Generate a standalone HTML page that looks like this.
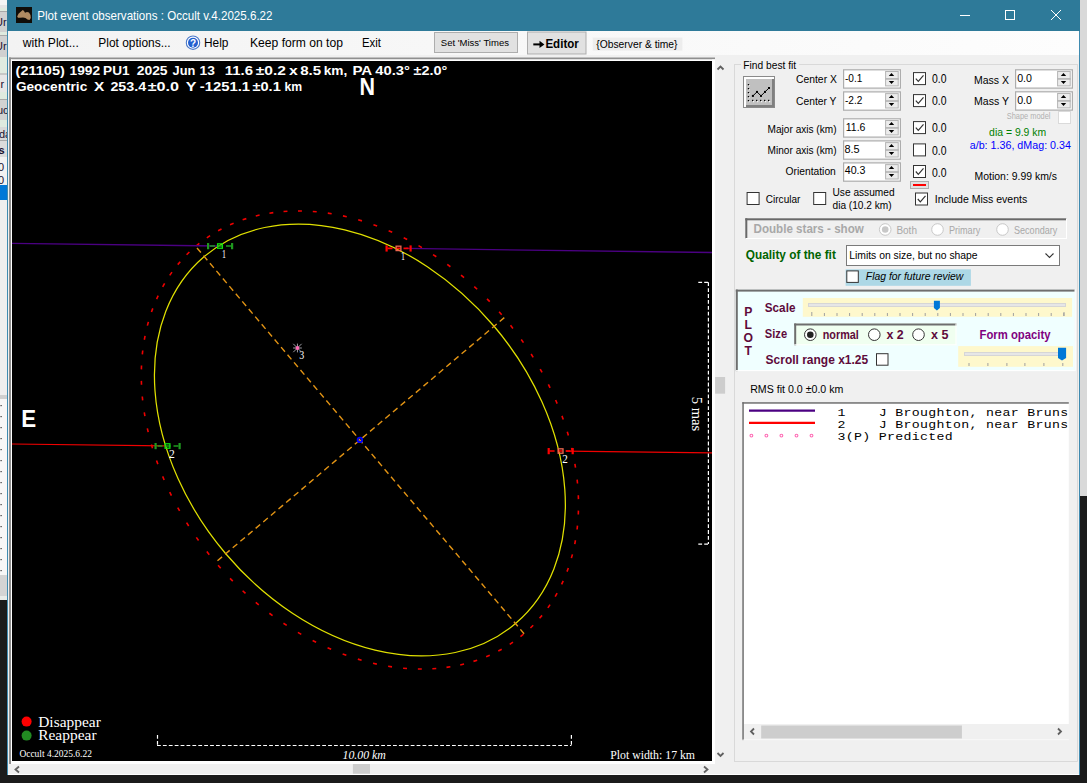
<!DOCTYPE html>
<html><head><meta charset="utf-8"><style>html,body{margin:0;padding:0;background:#1b1b1b;overflow:hidden}svg{display:block}text{white-space:pre}</style></head><body>
<svg width="1087" height="783" viewBox="0 0 1087 783">
<rect x="0" y="0" width="1087" height="783" fill="#1b1b1b" />
<rect x="0" y="0" width="7" height="600" fill="#e9ece9" />
<rect x="0" y="0" width="7" height="5" fill="#f4f4f4" />
<rect x="0" y="5" width="7" height="3" fill="#e4e4e4" />
<rect x="0" y="8" width="7" height="3" fill="#dfeadf" />
<rect x="0" y="11" width="7" height="21" fill="#d0d0d0" />
<rect x="0" y="32" width="7" height="3" fill="#dfeadf" />
<rect x="0" y="35" width="7" height="22" fill="#d0d0d0" />
<rect x="0" y="57" width="7" height="16.5" fill="#e0ebe0" />
<rect x="0" y="73.5" width="7" height="18.5" fill="#e6e6e6" />
<rect x="0" y="92" width="7" height="7" fill="#dfeadf" />
<rect x="0" y="99" width="7" height="21" fill="#d2d2d2" />
<rect x="0" y="120" width="7" height="7" fill="#dfeadf" />
<rect x="0" y="127" width="7" height="13" fill="#d8d8d8" />
<rect x="0" y="140" width="7" height="17" fill="#dcdcdc" />
<rect x="0" y="157" width="7" height="28" fill="#f2f2f2" />
<rect x="0" y="185" width="7" height="15" fill="#0078d7" />
<rect x="0" y="200" width="7" height="195" fill="#eeeeee" />
<rect x="0" y="395" width="7" height="4" fill="#cfcfcf" />
<rect x="0" y="399" width="7" height="176" fill="#f7f7f7" />
<rect x="0" y="575" width="7" height="21" fill="#d4d4d4" />
<rect x="0" y="11" width="7" height="1" fill="#a8a8a8" />
<rect x="0" y="35" width="7" height="1" fill="#a8a8a8" />
<rect x="0" y="73.5" width="7" height="1" fill="#a8a8a8" />
<rect x="0" y="99" width="7" height="1" fill="#a8a8a8" />
<rect x="0" y="140" width="7" height="1" fill="#a8a8a8" />
<g clip-path="url(#lsc)"><defs><clipPath id="lsc"><rect x="0" y="0" width="7" height="600"/></clipPath></defs>
<text x="-5" y="25.5" font-family="Liberation Sans" font-size="11" font-weight="normal" fill="#1a1030">Ur</text>
<text x="-5" y="50" font-family="Liberation Sans" font-size="11" font-weight="normal" fill="#1a1030">Ur</text>
<text x="0.5" y="87.5" font-family="Liberation Sans" font-size="11" font-weight="normal" fill="#1a1030">r</text>
<text x="-3" y="113.5" font-family="Liberation Sans" font-size="11" font-weight="normal" fill="#1a1030">uc</text>
<text x="-1" y="138" font-family="Liberation Sans" font-size="11" font-weight="normal" fill="#1a1030">da</text>
<text x="-1.5" y="153.5" font-family="Liberation Sans" font-size="11" font-weight="bold" fill="#1a1030">s</text>
<text x="-2" y="170.5" font-family="Liberation Sans" font-size="11" font-weight="normal" fill="#1a1030">0</text>
<text x="-2" y="183.5" font-family="Liberation Sans" font-size="11" font-weight="normal" fill="#1a1030">0</text>
<rect x="0.5" y="405" width="1.2" height="1.2" fill="#333333" />
<rect x="0.5" y="416" width="1.2" height="1.2" fill="#333333" />
<rect x="0.5" y="427" width="1.2" height="1.2" fill="#333333" />
<rect x="0.5" y="438" width="1.2" height="1.2" fill="#333333" />
<rect x="0.5" y="449" width="1.2" height="1.2" fill="#333333" />
<rect x="0.5" y="460" width="1.2" height="1.2" fill="#333333" />
<rect x="0.5" y="471" width="1.2" height="1.2" fill="#333333" />
<rect x="0.5" y="482" width="1.2" height="1.2" fill="#333333" />
<rect x="0.5" y="493" width="1.2" height="1.2" fill="#333333" />
<rect x="0.5" y="504" width="1.2" height="1.2" fill="#333333" />
<rect x="0.5" y="515" width="1.2" height="1.2" fill="#333333" />
<rect x="0.5" y="526" width="1.2" height="1.2" fill="#333333" />
<rect x="0.5" y="537" width="1.2" height="1.2" fill="#333333" />
<rect x="0.5" y="548" width="1.2" height="1.2" fill="#333333" />
<rect x="0.5" y="559" width="1.2" height="1.2" fill="#333333" />
<rect x="0.5" y="570" width="1.2" height="1.2" fill="#333333" />
</g>
<rect x="1080" y="0" width="7" height="496" fill="#d9d9d9" />
<rect x="7" y="0" width="1073" height="775" fill="#f0f0f0" />
<rect x="7" y="0" width="1073" height="31" fill="#2e7a99" />
<defs><linearGradient id="mg" x1="0" x2="1" y1="0" y2="0"><stop offset="0" stop-color="#f3f3f3"/><stop offset="1" stop-color="#fdfdfd"/></linearGradient></defs>
<rect x="8" y="31" width="1071" height="24" fill="url(#mg)" />
<rect x="7" y="31" width="1" height="744" fill="#3f8bb0" />
<rect x="1079" y="31" width="1" height="744" fill="#3f8bb0" />
<rect x="16" y="7" width="16" height="16" fill="#100d08"/>
<path d="M17.2 16.5 L18.5 13.8 L21 11.5 L22.8 10 L24 11 L25 12.8 L27 12 L29 12.5 L30.5 15 L30.8 18 L29.5 20 L27.5 19.5 L25.5 18 L23 17.5 L20 17.8 L18 17.8 Z" fill="#b08c62"/>
<text transform="translate(37.20 20.30) scale(0.9658 1)" font-family="Liberation Sans" font-size="12" font-weight="normal" font-style="normal" fill="#ffffff" >Plot event observations : Occult v.4.2025.6.22</text>
<line x1="960" y1="15.5" x2="970" y2="15.5" stroke="#ffffff" stroke-width="1" />
<rect x="1005.5" y="10.5" width="9" height="9" fill="none" stroke="#ffffff" stroke-width="1"/>
<line x1="1051" y1="10" x2="1061" y2="20" stroke="#ffffff" stroke-width="1" />
<line x1="1061" y1="10" x2="1051" y2="20" stroke="#ffffff" stroke-width="1" />
<text transform="translate(22.85 47.40) scale(1.0126 1)" font-family="Liberation Sans" font-size="12" font-weight="normal" font-style="normal" fill="#000" >with Plot...</text>
<text transform="translate(98.30 47.40) scale(0.9959 1)" font-family="Liberation Sans" font-size="12" font-weight="normal" font-style="normal" fill="#000" >Plot options...</text>
<circle cx="193" cy="42.7" r="6.7" fill="#ffffff" stroke="#4a78c8" stroke-width="1.1"/>
<circle cx="193" cy="42.7" r="5" fill="#2460d0"/>
<text x="193" y="46.8" text-anchor="middle" font-family="Liberation Sans" font-weight="bold" font-size="10" fill="#fff">?</text>
<text transform="translate(204.00 47.40) scale(0.9919 1)" font-family="Liberation Sans" font-size="12" font-weight="normal" font-style="normal" fill="#000" >Help</text>
<text transform="translate(250.00 47.40) scale(1.0103 1)" font-family="Liberation Sans" font-size="12" font-weight="normal" font-style="normal" fill="#000" >Keep form on top</text>
<text transform="translate(362.00 47.40) scale(0.9500 1)" font-family="Liberation Sans" font-size="12" font-weight="normal" font-style="normal" fill="#000" >Exit</text>
<rect x="434.5" y="32.5" width="83" height="20" fill="#e1e1e1" stroke="#adadad" stroke-width="1"/>
<text transform="translate(440.80 46.00) scale(0.9722 1)" font-family="Liberation Sans" font-size="9.8" font-weight="normal" font-style="normal" fill="#000" >Set 'Miss' Times</text>
<rect x="527.5" y="32" width="58.5" height="22" fill="#e1e1e1" stroke="#adadad" stroke-width="1"/>
<path d="M533.3 44.4 H541.5" stroke="#000" stroke-width="2"/><path d="M539.5 40.8 L544.4 44.4 L539.5 48 Z" fill="#000"/>
<text transform="translate(545.40 47.60) scale(0.8895 1)" font-family="Liberation Sans" font-size="13" font-weight="bold" font-style="normal" fill="#000" >Editor</text>
<rect x="592.7" y="37.6" width="89.7" height="13" fill="#ededed" />
<text transform="translate(596.30 48.30) scale(0.8959 1)" font-family="Liberation Sans" font-size="11.5" font-weight="normal" font-style="normal" fill="#000" >{Observer &amp; time}</text>
<rect x="9" y="57.5" width="706" height="2" fill="#8f8f8f" />
<rect x="9" y="57.5" width="2" height="706.5" fill="#8f8f8f" />
<rect x="11" y="59.5" width="704" height="1.5" fill="#ffffff" />
<rect x="11" y="59.5" width="1" height="704.5" fill="#ffffff" />
<rect x="712" y="59.5" width="3" height="704.5" fill="#ffffff" />
<rect x="11" y="761" width="704" height="3" fill="#ffffff" />
<rect x="12" y="61" width="700" height="700" fill="#000000" />
<g clip-path="url(#pc)">
<defs><clipPath id="pc"><rect x="12" y="61" width="700" height="700"/></clipPath></defs>
<path d="M523.49 634.17L520.47 636.64M512.97 642.18L509.73 644.35M501.71 649.20L498.28 651.06M489.76 655.20L486.18 656.74M477.18 660.15L473.47 661.37M464.03 664.03L460.22 664.93M450.36 666.82L446.50 667.39M436.26 668.50L432.36 668.76M421.79 669.07L417.88 669.03M407.01 668.52L403.11 668.20M392.00 666.86L388.14 666.26M376.84 664.10L373.03 663.23M361.60 660.24L357.85 659.13M346.34 655.31L342.67 653.96M331.16 649.33L327.58 647.76M316.11 642.33L312.63 640.56M301.28 634.35L297.90 632.38M286.73 625.42L283.47 623.26M272.54 615.58L269.40 613.25M258.77 604.89L255.77 602.40M245.50 593.40L242.63 590.75M232.78 581.16L230.06 578.36M220.69 568.23L218.11 565.30M209.27 554.68L206.85 551.62M198.58 540.56L196.33 537.38M188.68 525.96L186.60 522.67M179.62 510.94L177.72 507.54M171.43 495.58L169.72 492.08M164.17 479.94L162.65 476.35M157.85 464.11L156.54 460.44M152.52 448.16L151.42 444.42M148.20 432.17L147.33 428.38M144.91 416.22L144.28 412.38M142.67 400.38L142.28 396.51M141.49 384.74L141.36 380.85M141.37 369.37L141.51 365.48M142.32 354.34L142.74 350.48M144.32 339.73L145.04 335.91M147.38 325.61L148.39 321.85M151.47 312.04L152.79 308.38M156.58 299.10L158.20 295.57M162.68 286.85L164.61 283.46M169.74 275.34L171.96 272.14M177.72 264.63L180.23 261.65M186.59 254.78L189.37 252.04M196.31 245.83L199.33 243.36M206.83 237.82L210.07 235.65M218.09 230.80L221.52 228.94M230.04 224.80L233.62 223.26M242.62 219.85L246.33 218.63M255.77 215.97L259.58 215.07M269.44 213.18L273.30 212.61M283.54 211.50L287.44 211.24M298.01 210.93L301.92 210.97M312.79 211.48L316.69 211.80M327.80 213.14L331.66 213.74M342.96 215.90L346.77 216.77M358.20 219.76L361.95 220.87M373.46 224.69L377.13 226.04M388.64 230.67L392.22 232.24M403.69 237.67L407.17 239.44M418.52 245.65L421.90 247.62M433.07 254.58L436.33 256.74M447.26 264.42L450.40 266.75M461.03 275.11L464.03 277.60M474.30 286.60L477.17 289.25M487.02 298.84L489.74 301.64M499.11 311.77L501.69 314.70M510.53 325.32L512.95 328.38M521.22 339.44L523.47 342.62M531.12 354.04L533.20 357.33M540.18 369.06L542.08 372.46M548.37 384.42L550.08 387.92M555.63 400.06L557.15 403.65M561.95 415.89L563.26 419.56M567.28 431.84L568.38 435.58M571.60 447.83L572.47 451.62M574.89 463.78L575.52 467.62M577.13 479.62L577.52 483.49M578.31 495.26L578.44 499.15M578.43 510.63L578.29 514.52M577.48 525.66L577.06 529.52M575.48 540.27L574.76 544.09M572.42 554.39L571.41 558.15M568.33 567.96L567.01 571.62M563.22 580.90L561.60 584.43M557.12 593.15L555.19 596.54M550.06 604.66L547.84 607.86M542.08 615.37L539.57 618.35M533.21 625.22L530.43 627.96" fill="none" stroke="#f00000" stroke-width="1.6"/>
<ellipse cx="359.9" cy="440.0" rx="240.6" ry="175.9" transform="rotate(49.7 359.9 440.0)" fill="none" stroke="#e0e000" stroke-width="1.25"/>
<line x1="197" y1="248" x2="524.1" y2="633.7" stroke="#e39414" stroke-width="1.4" stroke-dasharray="6 4"/>
<line x1="504.3" y1="317.6" x2="215.5" y2="562.4" stroke="#e39414" stroke-width="1.4" stroke-dasharray="6 4"/>
<line x1="12" y1="243.31" x2="218" y2="246.01" stroke="#4b0082" stroke-width="1.3"/>
<line x1="406" y1="248.47" x2="712" y2="252.48" stroke="#4b0082" stroke-width="1.3"/>
<line x1="12" y1="444.01" x2="165" y2="445.97" stroke="#f00000" stroke-width="1.2"/>
<line x1="566" y1="451.10" x2="712" y2="452.97" stroke="#f00000" stroke-width="1.2"/>
<rect x="207.00" y="243.04" width="2.2" height="6.2" fill="#1f9a1f"/>
<rect x="231.00" y="243.04" width="2.2" height="6.2" fill="#1f9a1f"/>
<line x1="231.00" y1="246.04" x2="209.00" y2="246.04" stroke="#1f9a1f" stroke-width="1.6" stroke-dasharray="5 3"/>
<rect x="217.60" y="243.84" width="4.8" height="4.4" fill="none" stroke="#10e010" stroke-width="1.3"/>
<rect x="385.50" y="245.38" width="2.2" height="6.2" fill="#ff0000"/>
<rect x="409.50" y="245.38" width="2.2" height="6.2" fill="#ff0000"/>
<line x1="387.50" y1="248.38" x2="409.50" y2="248.38" stroke="#ff0000" stroke-width="1.6" stroke-dasharray="5 3"/>
<rect x="396.10" y="246.18" width="4.8" height="4.4" fill="none" stroke="#f06850" stroke-width="1.3"/>
<rect x="154.50" y="443.00" width="2.2" height="6.2" fill="#1f9a1f"/>
<rect x="178.50" y="443.00" width="2.2" height="6.2" fill="#1f9a1f"/>
<line x1="178.50" y1="446.00" x2="156.50" y2="446.00" stroke="#1f9a1f" stroke-width="1.6" stroke-dasharray="5 3"/>
<rect x="165.10" y="443.80" width="4.8" height="4.4" fill="none" stroke="#10e010" stroke-width="1.3"/>
<rect x="547.60" y="448.03" width="2.2" height="6.2" fill="#ff0000"/>
<rect x="571.60" y="448.03" width="2.2" height="6.2" fill="#ff0000"/>
<line x1="549.60" y1="451.03" x2="571.60" y2="451.03" stroke="#ff0000" stroke-width="1.6" stroke-dasharray="5 3"/>
<rect x="558.20" y="448.83" width="4.8" height="4.4" fill="none" stroke="#f06850" stroke-width="1.3"/>
<text transform="translate(222.00 258.00) scale(0.5926 1)" font-family="Liberation Serif" font-size="13.5" font-weight="normal" font-style="normal" fill="#ffffff" >1</text>
<text transform="translate(401.00 260.00) scale(0.5926 1)" font-family="Liberation Serif" font-size="13.5" font-weight="normal" font-style="normal" fill="#ffffff" >1</text>
<text transform="translate(169.10 458.00) scale(0.8593 1)" font-family="Liberation Serif" font-size="13.5" font-weight="normal" font-style="normal" fill="#ffffff" >2</text>
<text transform="translate(562.20 463.00) scale(0.8296 1)" font-family="Liberation Serif" font-size="13.5" font-weight="normal" font-style="normal" fill="#ffffff" >2</text>
<text transform="translate(299.20 359.00) scale(0.7407 1)" font-family="Liberation Serif" font-size="13.5" font-weight="normal" font-style="normal" fill="#ffffff" >3</text>
<line x1="293.05" y1="348.00" x2="301.85" y2="348.00" stroke="#9a9aa2" stroke-width="1"/>
<line x1="297.45" y1="343.60" x2="297.45" y2="352.40" stroke="#9a9aa2" stroke-width="1"/>
<line x1="293.25" y1="343.80" x2="301.65" y2="352.20" stroke="#9a9aa2" stroke-width="1"/>
<line x1="293.25" y1="352.20" x2="301.65" y2="343.80" stroke="#9a9aa2" stroke-width="1"/>
<circle cx="297.45" cy="348" r="1.9" fill="#ff69b4"/>
<circle cx="359.9" cy="439.9" r="2.3" fill="none" stroke="#0000ff" stroke-width="1.8"/>
</g>
<text transform="translate(15.60 75.00) scale(1.1156 1)" font-family="Liberation Sans" font-size="13" font-weight="bold" font-style="normal" fill="#ffffff" >(21105)</text>
<text transform="translate(69.60 75.00) scale(1.0554 1)" font-family="Liberation Sans" font-size="13" font-weight="bold" font-style="normal" fill="#ffffff" >1992</text>
<text transform="translate(103.10 75.00) scale(1.0474 1)" font-family="Liberation Sans" font-size="13" font-weight="bold" font-style="normal" fill="#ffffff" >PU1</text>
<text transform="translate(136.70 75.00) scale(1.0692 1)" font-family="Liberation Sans" font-size="13" font-weight="bold" font-style="normal" fill="#ffffff" >2025</text>
<text transform="translate(172.50 75.00) scale(0.9870 1)" font-family="Liberation Sans" font-size="13" font-weight="bold" font-style="normal" fill="#ffffff" >Jun</text>
<text transform="translate(199.50 75.00) scale(1.0588 1)" font-family="Liberation Sans" font-size="13" font-weight="bold" font-style="normal" fill="#ffffff" >13</text>
<text transform="translate(224.80 75.00) scale(1.1504 1)" font-family="Liberation Sans" font-size="13" font-weight="bold" font-style="normal" fill="#ffffff" >11.6</text>
<text transform="translate(255.70 75.00) scale(1.1984 1)" font-family="Liberation Sans" font-size="13" font-weight="bold" font-style="normal" fill="#ffffff" >±0.2</text>
<text transform="translate(288.90 75.00) scale(1.2138 1)" font-family="Liberation Sans" font-size="13" font-weight="bold" font-style="normal" fill="#ffffff" >x</text>
<text transform="translate(300.20 75.00) scale(1.1634 1)" font-family="Liberation Sans" font-size="13" font-weight="bold" font-style="normal" fill="#ffffff" >8.5</text>
<text transform="translate(323.70 75.00) scale(1.0536 1)" font-family="Liberation Sans" font-size="13" font-weight="bold" font-style="normal" fill="#ffffff" >km,</text>
<text transform="translate(352.40 75.00) scale(1.1637 1)" font-family="Liberation Sans" font-size="13" font-weight="bold" font-style="normal" fill="#ffffff" >PA</text>
<text transform="translate(375.30 75.00) scale(1.1344 1)" font-family="Liberation Sans" font-size="13" font-weight="bold" font-style="normal" fill="#ffffff" >40.3°</text>
<text transform="translate(413.60 75.00) scale(1.1118 1)" font-family="Liberation Sans" font-size="13" font-weight="bold" font-style="normal" fill="#ffffff" >±2.0°</text>
<text transform="translate(15.90 90.50) scale(1.0515 1)" font-family="Liberation Sans" font-size="13" font-weight="bold" font-style="normal" fill="#ffffff" >Geocentric</text>
<text transform="translate(94.00 90.50) scale(1.1908 1)" font-family="Liberation Sans" font-size="13" font-weight="bold" font-style="normal" fill="#ffffff" >X</text>
<text transform="translate(110.40 90.50) scale(1.0998 1)" font-family="Liberation Sans" font-size="13" font-weight="bold" font-style="normal" fill="#ffffff" >253.4</text>
<text transform="translate(147.70 90.50) scale(1.2460 1)" font-family="Liberation Sans" font-size="13" font-weight="bold" font-style="normal" fill="#ffffff" >±0.0</text>
<text transform="translate(185.80 90.50) scale(1.2370 1)" font-family="Liberation Sans" font-size="13" font-weight="bold" font-style="normal" fill="#ffffff" >Y</text>
<text transform="translate(199.80 90.50) scale(1.1406 1)" font-family="Liberation Sans" font-size="13" font-weight="bold" font-style="normal" fill="#ffffff" >-1251.1</text>
<text transform="translate(252.50 90.50) scale(1.1230 1)" font-family="Liberation Sans" font-size="13" font-weight="bold" font-style="normal" fill="#ffffff" >±0.1</text>
<text transform="translate(284.40 90.50) scale(0.9415 1)" font-family="Liberation Sans" font-size="13" font-weight="bold" font-style="normal" fill="#ffffff" >km</text>
<text transform="translate(359.50 95.00) scale(0.9337 1)" font-family="Liberation Sans" font-size="23" font-weight="bold" font-style="normal" fill="#ffffff" >N</text>
<text transform="translate(21.20 427.00) scale(0.9707 1)" font-family="Liberation Sans" font-size="23" font-weight="bold" font-style="normal" fill="#ffffff" >E</text>
<line x1="157.5" y1="735" x2="157.5" y2="745.5" stroke="#ffffff" stroke-width="1.2" stroke-dasharray="3.8 2.1"/>
<line x1="157" y1="745.5" x2="571.4" y2="745.5" stroke="#ffffff" stroke-width="1.2" stroke-dasharray="3.8 2.1"/>
<line x1="571.4" y1="735" x2="571.4" y2="745.5" stroke="#ffffff" stroke-width="1.2" stroke-dasharray="3.8 2.1"/>
<line x1="698.3" y1="282.3" x2="708.4" y2="282.3" stroke="#ffffff" stroke-width="1.2" stroke-dasharray="3.8 2.1"/>
<line x1="708.4" y1="282.3" x2="708.4" y2="544.1" stroke="#ffffff" stroke-width="1.2" stroke-dasharray="3.8 2.1"/>
<line x1="698.3" y1="544.1" x2="708.4" y2="544.1" stroke="#ffffff" stroke-width="1.2" stroke-dasharray="3.8 2.1"/>
<text transform="translate(342.50 758.70) scale(0.9466 1)" font-family="Liberation Serif" font-size="12.5" font-weight="normal" font-style="italic" fill="#ffffff" >10.00 km</text>
<g transform="translate(692.4 396.7) rotate(90)">
<text transform="translate(0.00 0.00) scale(0.9746 1)" font-family="Liberation Serif" font-size="15" font-weight="normal" font-style="normal" fill="#ffffff" >5 mas</text>
</g>
<text transform="translate(610.20 758.70) scale(0.9289 1)" font-family="Liberation Serif" font-size="12.7" font-weight="normal" font-style="normal" fill="#ffffff" >Plot width: 17 km</text>
<circle cx="26.6" cy="721.6" r="5" fill="#ff0000"/>
<circle cx="26.6" cy="735.6" r="5" fill="#228b22"/>
<text transform="translate(38.20 727.10) scale(1.0296 1)" font-family="Liberation Serif" font-size="15" font-weight="normal" font-style="normal" fill="#ffffff" >Disappear</text>
<text transform="translate(38.20 740.40) scale(1.0309 1)" font-family="Liberation Serif" font-size="15" font-weight="normal" font-style="normal" fill="#ffffff" >Reappear</text>
<text transform="translate(19.40 756.70) scale(0.9472 1)" font-family="Liberation Serif" font-size="10" font-weight="normal" font-style="normal" fill="#ffffff" >Occult 4.2025.6.22</text>
<rect x="715" y="61" width="19" height="700" fill="#f0f0f0" />
<rect x="715.1" y="377" width="10" height="16.7" fill="#cdcdcd" />
<path d="M717.5 69.5 L720.5 66.5 L723.5 69.5" fill="none" stroke="#606060" stroke-width="1.8"/>
<path d="M717.5 753 L720.5 756 L723.5 753" fill="none" stroke="#606060" stroke-width="1.8"/>
<rect x="12" y="764" width="703" height="10" fill="#f0f0f0" />
<rect x="352.9" y="764" width="17.1" height="9.75" fill="#cdcdcd" />
<path d="M19 766.5 L15.5 769.5 L19 772.5" fill="none" stroke="#606060" stroke-width="1.8"/>
<path d="M704 766.5 L707.5 769.5 L704 772.5" fill="none" stroke="#606060" stroke-width="1.8"/>
<rect x="8" y="774" width="1071" height="1" fill="#ffffff" />
<line x1="734.5" y1="64.5" x2="734.5" y2="761" stroke="#d9d9d9" stroke-width="1" />
<line x1="734" y1="761.5" x2="1077.5" y2="761.5" stroke="#d9d9d9" stroke-width="1" />
<line x1="1077.5" y1="64" x2="1077.5" y2="761.5" stroke="#d9d9d9" stroke-width="1" />
<line x1="734" y1="64.5" x2="741" y2="64.5" stroke="#d9d9d9" stroke-width="1" />
<line x1="799" y1="64.5" x2="1078" y2="64.5" stroke="#d9d9d9" stroke-width="1" />
<text transform="translate(743.30 68.80) scale(0.8898 1)" font-family="Liberation Sans" font-size="11.5" font-weight="normal" font-style="normal" fill="#000" >Find best fit</text>
<rect x="743" y="76" width="32" height="32" fill="#8a8a8a" />
<rect x="744" y="77" width="30" height="30" fill="#ffffff" />
<rect x="746" y="79" width="28" height="28" fill="#808080" />
<rect x="746" y="79" width="26" height="26" fill="#c0c0c0" />
<rect x="748.5" y="85.0" width="1.2" height="1.2" fill="#ffffff"/><rect x="747.8" y="84.0" width="1.3" height="1.3" fill="#000"/>
<rect x="748.5" y="89.0" width="1.2" height="1.2" fill="#ffffff"/><rect x="747.8" y="88.0" width="1.3" height="1.3" fill="#000"/>
<rect x="748.5" y="93.0" width="1.2" height="1.2" fill="#ffffff"/><rect x="747.8" y="92.0" width="1.3" height="1.3" fill="#000"/>
<rect x="748.5" y="97.0" width="1.2" height="1.2" fill="#ffffff"/><rect x="747.8" y="96.0" width="1.3" height="1.3" fill="#000"/>
<rect x="748.5" y="101.0" width="1.2" height="1.2" fill="#ffffff"/><rect x="747.8" y="100.0" width="1.3" height="1.3" fill="#000"/>
<rect x="753.0" y="101" width="1.2" height="1.2" fill="#ffffff"/><rect x="752.0" y="99.8" width="1.3" height="1.3" fill="#000"/>
<rect x="757.0" y="101" width="1.2" height="1.2" fill="#ffffff"/><rect x="756.0" y="99.8" width="1.3" height="1.3" fill="#000"/>
<rect x="761.0" y="101" width="1.2" height="1.2" fill="#ffffff"/><rect x="760.0" y="99.8" width="1.3" height="1.3" fill="#000"/>
<rect x="765.0" y="101" width="1.2" height="1.2" fill="#ffffff"/><rect x="764.0" y="99.8" width="1.3" height="1.3" fill="#000"/>
<rect x="769.0" y="101" width="1.2" height="1.2" fill="#ffffff"/><rect x="768.0" y="99.8" width="1.3" height="1.3" fill="#000"/>
<polyline points="752.9,95.9 757,91.9 761,95.9 765,91.9 769,88" fill="none" stroke="#000" stroke-width="1"/>
<rect x="751.9" y="94.9" width="2" height="2" fill="#000"/>
<rect x="756.0" y="90.9" width="2" height="2" fill="#000"/>
<rect x="760.0" y="94.9" width="2" height="2" fill="#000"/>
<rect x="764.0" y="90.9" width="2" height="2" fill="#000"/>
<rect x="768.0" y="87.0" width="2" height="2" fill="#000"/>
<text transform="translate(796.00 83.30) scale(0.9009 1)" font-family="Liberation Sans" font-size="11.5" font-weight="normal" font-style="normal" fill="#000" >Center X</text>
<g>
<rect x="843.6" y="69.8" width="56.8" height="18.3" fill="#ffffff" stroke="#adadad" stroke-width="1.2"/>
<rect x="885.6" y="71.5" width="12.6" height="14.4" fill="#ececec" stroke="#b4b4b4" stroke-width="1"/>
<rect x="885.1" y="78.10000000000001" width="13.6" height="1.6" fill="#b4b4b4"/>
<path d="M888.80 76.00 L891.50 72.90 L894.20 76.00 Z" fill="#000"/>
<path d="M888.80 81.00 L891.50 84.00 L894.20 81.00 Z" fill="#000"/>
<text x="845.00" y="81.80" font-family="Liberation Sans" font-size="11.5" font-weight="normal" font-style="normal" fill="#000" ></text>
</g>
<text transform="translate(844.90 81.80) scale(0.8788 1)" font-family="Liberation Sans" font-size="11.5" font-weight="normal" font-style="normal" fill="#000" >-0.1</text>
<text transform="translate(796.00 105.40) scale(0.8960 1)" font-family="Liberation Sans" font-size="11.5" font-weight="normal" font-style="normal" fill="#000" >Center Y</text>
<g>
<rect x="843.6" y="91.89999999999999" width="56.8" height="18.3" fill="#ffffff" stroke="#adadad" stroke-width="1.2"/>
<rect x="885.6" y="93.6" width="12.6" height="14.4" fill="#ececec" stroke="#b4b4b4" stroke-width="1"/>
<rect x="885.1" y="100.2" width="13.6" height="1.6" fill="#b4b4b4"/>
<path d="M888.80 98.10 L891.50 95.00 L894.20 98.10 Z" fill="#000"/>
<path d="M888.80 103.10 L891.50 106.10 L894.20 103.10 Z" fill="#000"/>
<text x="845.00" y="103.80" font-family="Liberation Sans" font-size="11.5" font-weight="normal" font-style="normal" fill="#000" ></text>
</g>
<text transform="translate(844.90 103.80) scale(0.8788 1)" font-family="Liberation Sans" font-size="11.5" font-weight="normal" font-style="normal" fill="#000" >-2.2</text>
<text transform="translate(767.60 132.70) scale(0.8779 1)" font-family="Liberation Sans" font-size="11.5" font-weight="normal" font-style="normal" fill="#000" >Major axis (km)</text>
<g>
<rect x="843.6" y="118.8" width="56.8" height="18.3" fill="#ffffff" stroke="#adadad" stroke-width="1.2"/>
<rect x="885.6" y="120.5" width="12.6" height="14.4" fill="#ececec" stroke="#b4b4b4" stroke-width="1"/>
<rect x="885.1" y="127.10000000000001" width="13.6" height="1.6" fill="#b4b4b4"/>
<path d="M888.80 125.00 L891.50 121.90 L894.20 125.00 Z" fill="#000"/>
<path d="M888.80 130.00 L891.50 133.00 L894.20 130.00 Z" fill="#000"/>
<text x="845.00" y="130.80" font-family="Liberation Sans" font-size="11.5" font-weight="normal" font-style="normal" fill="#000" ></text>
</g>
<text transform="translate(845.80 130.80) scale(0.9142 1)" font-family="Liberation Sans" font-size="11.5" font-weight="normal" font-style="normal" fill="#000" >11.6</text>
<text transform="translate(767.60 154.00) scale(0.8779 1)" font-family="Liberation Sans" font-size="11.5" font-weight="normal" font-style="normal" fill="#000" >Minor axis (km)</text>
<g>
<rect x="843.6" y="140.9" width="56.8" height="18.3" fill="#ffffff" stroke="#adadad" stroke-width="1.2"/>
<rect x="885.6" y="142.60000000000002" width="12.6" height="14.4" fill="#ececec" stroke="#b4b4b4" stroke-width="1"/>
<rect x="885.1" y="149.20000000000002" width="13.6" height="1.6" fill="#b4b4b4"/>
<path d="M888.80 147.10 L891.50 144.00 L894.20 147.10 Z" fill="#000"/>
<path d="M888.80 152.10 L891.50 155.10 L894.20 152.10 Z" fill="#000"/>
<text x="845.00" y="152.90" font-family="Liberation Sans" font-size="11.5" font-weight="normal" font-style="normal" fill="#000" ></text>
</g>
<text transform="translate(844.40 152.90) scale(0.9500 1)" font-family="Liberation Sans" font-size="11.5" font-weight="normal" font-style="normal" fill="#000" >8.5</text>
<text transform="translate(785.50 175.40) scale(0.8960 1)" font-family="Liberation Sans" font-size="11.5" font-weight="normal" font-style="normal" fill="#000" >Orientation</text>
<g>
<rect x="843.6" y="162.9" width="56.8" height="18.3" fill="#ffffff" stroke="#adadad" stroke-width="1.2"/>
<rect x="885.6" y="164.60000000000002" width="12.6" height="14.4" fill="#ececec" stroke="#b4b4b4" stroke-width="1"/>
<rect x="885.1" y="171.20000000000002" width="13.6" height="1.6" fill="#b4b4b4"/>
<path d="M888.80 169.10 L891.50 166.00 L894.20 169.10 Z" fill="#000"/>
<path d="M888.80 174.10 L891.50 177.10 L894.20 174.10 Z" fill="#000"/>
<text x="845.00" y="174.30" font-family="Liberation Sans" font-size="11.5" font-weight="normal" font-style="normal" fill="#000" ></text>
</g>
<text transform="translate(844.80 174.30) scale(0.9241 1)" font-family="Liberation Sans" font-size="11.5" font-weight="normal" font-style="normal" fill="#000" >40.3</text>
<rect x="913.5" y="72.6" width="12" height="12" fill="#ffffff" stroke="#333333" stroke-width="1"/>
<path d="M915.8 78.6 L918.3 81.39999999999999 L923.5 75.39999999999999" fill="none" stroke="#333333" stroke-width="1.2"/>
<text transform="translate(932.00 83.10) scale(0.8683 1)" font-family="Liberation Sans" font-size="12" font-weight="normal" font-style="normal" fill="#000" >0.0</text>
<rect x="913.5" y="94.6" width="12" height="12" fill="#ffffff" stroke="#333333" stroke-width="1"/>
<path d="M915.8 100.6 L918.3 103.39999999999999 L923.5 97.39999999999999" fill="none" stroke="#333333" stroke-width="1.2"/>
<text transform="translate(932.00 105.20) scale(0.8683 1)" font-family="Liberation Sans" font-size="12" font-weight="normal" font-style="normal" fill="#000" >0.0</text>
<rect x="913.5" y="121.6" width="12" height="12" fill="#ffffff" stroke="#333333" stroke-width="1"/>
<path d="M915.8 127.6 L918.3 130.4 L923.5 124.39999999999999" fill="none" stroke="#333333" stroke-width="1.2"/>
<text transform="translate(932.00 132.10) scale(0.8683 1)" font-family="Liberation Sans" font-size="12" font-weight="normal" font-style="normal" fill="#000" >0.0</text>
<rect x="913.5" y="143.9" width="12" height="12" fill="#ffffff" stroke="#333333" stroke-width="1"/>
<text transform="translate(932.00 154.60) scale(0.8683 1)" font-family="Liberation Sans" font-size="12" font-weight="normal" font-style="normal" fill="#000" >0.0</text>
<rect x="913.5" y="165.5" width="12" height="12" fill="#ffffff" stroke="#333333" stroke-width="1"/>
<path d="M915.8 171.5 L918.3 174.3 L923.5 168.3" fill="none" stroke="#333333" stroke-width="1.2"/>
<text transform="translate(932.00 177.00) scale(0.8683 1)" font-family="Liberation Sans" font-size="12" font-weight="normal" font-style="normal" fill="#000" >0.0</text>
<rect x="910.5" y="181.5" width="18" height="7" fill="#e1e1e1" stroke="#adadad" stroke-width="1"/>
<line x1="913" y1="185" x2="926" y2="185" stroke="#ff0000" stroke-width="2" />
<text transform="translate(974.00 83.60) scale(0.9126 1)" font-family="Liberation Sans" font-size="11.5" font-weight="normal" font-style="normal" fill="#000" >Mass X</text>
<rect x="1015.6" y="69.8" width="56.8" height="18.3" fill="#ffffff" stroke="#adadad" stroke-width="1.2"/>
<rect x="1057.6" y="71.5" width="12.6" height="14.4" fill="#ececec" stroke="#b4b4b4" stroke-width="1"/>
<rect x="1057.1" y="78.10000000000001" width="13.6" height="1.6" fill="#b4b4b4"/>
<path d="M1060.80 76.00 L1063.50 72.90 L1066.20 76.00 Z" fill="#000"/>
<path d="M1060.80 81.00 L1063.50 84.00 L1066.20 81.00 Z" fill="#000"/>
<text x="1017.00" y="81.30" font-family="Liberation Sans" font-size="11.5" font-weight="normal" font-style="normal" fill="#000" ></text>
<text transform="translate(1017.20 81.50) scale(0.9250 1)" font-family="Liberation Sans" font-size="11.5" font-weight="normal" font-style="normal" fill="#000" >0.0</text>
<text transform="translate(974.00 105.20) scale(0.9174 1)" font-family="Liberation Sans" font-size="11.5" font-weight="normal" font-style="normal" fill="#000" >Mass Y</text>
<rect x="1015.6" y="91.8" width="56.8" height="18.3" fill="#ffffff" stroke="#adadad" stroke-width="1.2"/>
<rect x="1057.6" y="93.5" width="12.6" height="14.4" fill="#ececec" stroke="#b4b4b4" stroke-width="1"/>
<rect x="1057.1" y="100.10000000000001" width="13.6" height="1.6" fill="#b4b4b4"/>
<path d="M1060.80 98.00 L1063.50 94.90 L1066.20 98.00 Z" fill="#000"/>
<path d="M1060.80 103.00 L1063.50 106.00 L1066.20 103.00 Z" fill="#000"/>
<text x="1017.00" y="103.20" font-family="Liberation Sans" font-size="11.5" font-weight="normal" font-style="normal" fill="#000" ></text>
<text transform="translate(1017.20 103.50) scale(0.9250 1)" font-family="Liberation Sans" font-size="11.5" font-weight="normal" font-style="normal" fill="#000" >0.0</text>
<text transform="translate(1006.70 118.70) scale(0.8256 1)" font-family="Liberation Sans" font-size="9" font-weight="normal" font-style="normal" fill="#b0b0b0" >Shape model</text>
<rect x="1058.5" y="111.5" width="12" height="12" fill="#ffffff" stroke="#dadada" stroke-width="1"/>
<text transform="translate(989.10 135.80) scale(0.9071 1)" font-family="Liberation Sans" font-size="11.5" font-weight="normal" font-style="normal" fill="#008000" >dia = 9.9 km</text>
<text transform="translate(969.70 149.40) scale(0.9319 1)" font-family="Liberation Sans" font-size="11.5" font-weight="normal" font-style="normal" fill="#0000ff" >a/b: 1.36, dMag: 0.34</text>
<text transform="translate(974.60 179.70) scale(0.9091 1)" font-family="Liberation Sans" font-size="11.5" font-weight="normal" font-style="normal" fill="#000" >Motion: 9.99 km/s</text>
<rect x="747.1" y="192.5" width="12" height="12" fill="#ffffff" stroke="#333333" stroke-width="1"/>
<text transform="translate(765.80 202.60) scale(0.8737 1)" font-family="Liberation Sans" font-size="11.5" font-weight="normal" font-style="normal" fill="#000" >Circular</text>
<rect x="813.7" y="192.5" width="12" height="12" fill="#ffffff" stroke="#333333" stroke-width="1"/>
<text transform="translate(832.50 196.00) scale(0.8834 1)" font-family="Liberation Sans" font-size="11.5" font-weight="normal" font-style="normal" fill="#000" >Use assumed</text>
<text transform="translate(832.50 208.50) scale(0.8823 1)" font-family="Liberation Sans" font-size="11.5" font-weight="normal" font-style="normal" fill="#000" >dia (10.2 km)</text>
<rect x="915.5" y="193.0" width="12" height="12" fill="#ffffff" stroke="#333333" stroke-width="1"/>
<path d="M917.8 199.0 L920.3 201.8 L925.5 195.8" fill="none" stroke="#333333" stroke-width="1.2"/>
<text transform="translate(934.80 202.50) scale(0.9168 1)" font-family="Liberation Sans" font-size="11.5" font-weight="normal" font-style="normal" fill="#000" >Include Miss events</text>
<rect x="745.3" y="218.3" width="321.7" height="20.7" fill="#f0f0f0" />
<rect x="745.3" y="218.3" width="321.7" height="2" fill="#696969" />
<rect x="745.3" y="218.3" width="2" height="20.7" fill="#696969" />
<rect x="745.3" y="238" width="321.7" height="1" fill="#ffffff" />
<rect x="1066" y="218.3" width="1" height="20.7" fill="#ffffff" />
<text transform="translate(753.50 232.80) scale(0.9693 1)" font-family="Liberation Sans" font-size="12" font-weight="bold" font-style="normal" fill="#a8a8a8" >Double stars - show</text>
<circle cx="885.2" cy="229.5" r="5.8" fill="#ffffff" stroke="#c8c8c8" stroke-width="1"/>
<circle cx="885.2" cy="229.5" r="3.3" fill="#c8c8c8"/>
<text x="896.40" y="234.00" font-family="Liberation Sans" font-size="10" font-weight="normal" font-style="normal" fill="#a8a8a8" >Both</text>
<circle cx="937.5" cy="229.5" r="5.8" fill="#ffffff" stroke="#c8c8c8" stroke-width="1"/>
<text transform="translate(948.90 234.00) scale(0.9115 1)" font-family="Liberation Sans" font-size="10" font-weight="normal" font-style="normal" fill="#a8a8a8" >Primary</text>
<circle cx="1002.5" cy="229.5" r="5.8" fill="#ffffff" stroke="#c8c8c8" stroke-width="1"/>
<text transform="translate(1014.00 234.00) scale(0.9059 1)" font-family="Liberation Sans" font-size="10" font-weight="normal" font-style="normal" fill="#a8a8a8" >Secondary</text>
<text transform="translate(745.80 259.30) scale(0.9874 1)" font-family="Liberation Sans" font-size="12" font-weight="bold" font-style="normal" fill="#006400" >Quality of the fit</text>
<rect x="846.5" y="245.5" width="213" height="20" fill="#ffffff" stroke="#7a7a7a" stroke-width="1"/>
<text transform="translate(849.20 258.80) scale(0.9021 1)" font-family="Liberation Sans" font-size="11.5" font-weight="normal" font-style="normal" fill="#000" >Limits on size, but no shape</text>
<path d="M1045.5 253.5 L1049.5 257.5 L1053.5 253.5" fill="none" stroke="#333" stroke-width="1.1"/>
<rect x="845.6" y="269.3" width="125.3" height="16.5" fill="#add8e6" />
<rect x="846.8" y="270.9" width="11.5" height="11.5" fill="#ffffff" stroke="#333333" stroke-width="1"/>
<text transform="translate(865.80 280.40) scale(0.9456 1)" font-family="Liberation Sans" font-size="11" font-weight="normal" font-style="italic" fill="#000" >Flag for future review</text>
<rect x="735.8" y="289.6" width="338.9" height="81.5" fill="#f0ffff" />
<rect x="735.8" y="289.6" width="338.9" height="2" fill="#6e6e6e" />
<rect x="735.8" y="289.6" width="2" height="81.5" fill="#6e6e6e" />
<rect x="735.8" y="370.1" width="339" height="1" fill="#ffffff" />
<rect x="1074.7" y="289.6" width="1" height="81.5" fill="#ffffff" />
<text x="748.2" y="315.6" text-anchor="middle" font-family="Liberation Sans" font-weight="bold" font-size="12.2" fill="#5e0b3b">P</text>
<text x="748.2" y="328.9" text-anchor="middle" font-family="Liberation Sans" font-weight="bold" font-size="12.2" fill="#5e0b3b">L</text>
<text x="748.2" y="342.1" text-anchor="middle" font-family="Liberation Sans" font-weight="bold" font-size="12.2" fill="#5e0b3b">O</text>
<text x="748.2" y="354.5" text-anchor="middle" font-family="Liberation Sans" font-weight="bold" font-size="12.2" fill="#5e0b3b">T</text>
<text transform="translate(764.80 311.50) scale(0.9372 1)" font-family="Liberation Sans" font-size="12.5" font-weight="bold" font-style="normal" fill="#5e0b3b" >Scale</text>
<rect x="802.8" y="298" width="269.3" height="18.8" fill="#fef8cc" />
<rect x="808.5" y="303.5" width="257" height="3" fill="#e6e6e6" stroke="#d6d6d6" stroke-width="1"/>
<path d="M933.9 300.8 H939.9 V308 L936.9 310.5 L933.9 308 Z" fill="#0078d7"/>
<rect x="811.3" y="312" width="1" height="4" fill="#a0a0a0"/>
<rect x="823.9" y="313" width="1" height="3" fill="#a0a0a0"/>
<rect x="836.5" y="313" width="1" height="3" fill="#a0a0a0"/>
<rect x="849.1" y="313" width="1" height="3" fill="#a0a0a0"/>
<rect x="861.7" y="313" width="1" height="3" fill="#a0a0a0"/>
<rect x="874.3" y="313" width="1" height="3" fill="#a0a0a0"/>
<rect x="886.9" y="313" width="1" height="3" fill="#a0a0a0"/>
<rect x="899.5" y="313" width="1" height="3" fill="#a0a0a0"/>
<rect x="912.1" y="313" width="1" height="3" fill="#a0a0a0"/>
<rect x="924.7" y="313" width="1" height="3" fill="#a0a0a0"/>
<rect x="937.3" y="313" width="1" height="3" fill="#a0a0a0"/>
<rect x="949.9" y="313" width="1" height="3" fill="#a0a0a0"/>
<rect x="962.5" y="313" width="1" height="3" fill="#a0a0a0"/>
<rect x="975.1" y="313" width="1" height="3" fill="#a0a0a0"/>
<rect x="987.7" y="313" width="1" height="3" fill="#a0a0a0"/>
<rect x="1000.3" y="313" width="1" height="3" fill="#a0a0a0"/>
<rect x="1012.9" y="313" width="1" height="3" fill="#a0a0a0"/>
<rect x="1025.5" y="313" width="1" height="3" fill="#a0a0a0"/>
<rect x="1038.1" y="313" width="1" height="3" fill="#a0a0a0"/>
<rect x="1050.7" y="313" width="1" height="3" fill="#a0a0a0"/>
<rect x="1063.3" y="313" width="1" height="3" fill="#a0a0a0"/>
<rect x="1063.5" y="312" width="1" height="4" fill="#a0a0a0"/>
<text transform="translate(764.80 338.00) scale(0.8920 1)" font-family="Liberation Sans" font-size="12.5" font-weight="bold" font-style="normal" fill="#5e0b3b" >Size</text>
<rect x="794.2" y="323.5" width="162.3" height="21.8" fill="#f0fff0" />
<rect x="794.2" y="323.5" width="162.3" height="2" fill="#6e6e6e" />
<rect x="794.2" y="323.5" width="2" height="21.8" fill="#6e6e6e" />
<rect x="794.2" y="344.3" width="162.3" height="1" fill="#ffffff" />
<rect x="955.5" y="323.5" width="1" height="21.8" fill="#ffffff" />
<circle cx="810.3" cy="334.7" r="5.8" fill="#ffffff" stroke="#333333" stroke-width="1"/>
<circle cx="810.3" cy="334.7" r="3.3" fill="#222222"/>
<text transform="translate(822.70 338.80) scale(0.8667 1)" font-family="Liberation Sans" font-size="12.5" font-weight="bold" font-style="normal" fill="#5e0b3b" >normal</text>
<circle cx="874.3" cy="334.7" r="5.8" fill="#ffffff" stroke="#333333" stroke-width="1"/>
<text transform="translate(886.50 338.80) scale(0.9943 1)" font-family="Liberation Sans" font-size="12.5" font-weight="bold" font-style="normal" fill="#5e0b3b" >x 2</text>
<circle cx="918.5" cy="334.7" r="5.8" fill="#ffffff" stroke="#333333" stroke-width="1"/>
<text transform="translate(931.00 338.80) scale(1.0057 1)" font-family="Liberation Sans" font-size="12.5" font-weight="bold" font-style="normal" fill="#5e0b3b" >x 5</text>
<text transform="translate(979.50 338.70) scale(0.9057 1)" font-family="Liberation Sans" font-size="12.5" font-weight="bold" font-style="normal" fill="#800080" >Form opacity</text>
<rect x="958.2" y="346.1" width="114.8" height="20.7" fill="#fef8cc" />
<rect x="964.5" y="352.5" width="99" height="3" fill="#e6e6e6" stroke="#d6d6d6" stroke-width="1"/>
<path d="M1058 347.8 H1066.1 V358 L1062 360.4 L1058 358 Z" fill="#0078d7"/>
<rect x="968.5" y="363" width="1" height="3" fill="#a0a0a0"/>
<rect x="987.4" y="363" width="1" height="3" fill="#a0a0a0"/>
<rect x="1006.4" y="363" width="1" height="3" fill="#a0a0a0"/>
<rect x="1024.4" y="363" width="1" height="3" fill="#a0a0a0"/>
<rect x="1043.4" y="363" width="1" height="3" fill="#a0a0a0"/>
<rect x="1062.3" y="363" width="1" height="3" fill="#a0a0a0"/>
<text transform="translate(765.60 363.60) scale(0.9589 1)" font-family="Liberation Sans" font-size="12.5" font-weight="bold" font-style="normal" fill="#5e0b3b" >Scroll range x1.25</text>
<rect x="876.5" y="353.7" width="11.5" height="11.5" fill="#ffffff" stroke="#333333" stroke-width="1"/>
<text transform="translate(750.20 392.80) scale(0.9247 1)" font-family="Liberation Sans" font-size="11.5" font-weight="normal" font-style="normal" fill="#000" >RMS fit 0.0 ±0.0 km</text>
<rect x="742.3" y="402.2" width="326.5" height="338" fill="#ffffff" />
<rect x="742.3" y="402.2" width="326.5" height="1.5" fill="#6e6e6e" />
<rect x="742.3" y="402.2" width="1.5" height="338" fill="#6e6e6e" />
<rect x="742.3" y="739.5" width="327" height="1" fill="#f0f0f0" />
<line x1="749" y1="410.7" x2="815" y2="410.7" stroke="#4b0082" stroke-width="2.2" />
<line x1="749" y1="422.8" x2="815" y2="422.8" stroke="#ff0000" stroke-width="2.2" />
<circle cx="751.4" cy="435.6" r="1.4" fill="none" stroke="#ff69b4" stroke-width="1.1"/>
<circle cx="766.4" cy="435.6" r="1.4" fill="none" stroke="#ff69b4" stroke-width="1.1"/>
<circle cx="781.4" cy="435.6" r="1.4" fill="none" stroke="#ff69b4" stroke-width="1.1"/>
<circle cx="796.5" cy="435.6" r="1.4" fill="none" stroke="#ff69b4" stroke-width="1.1"/>
<circle cx="811.5" cy="435.6" r="1.4" fill="none" stroke="#ff69b4" stroke-width="1.1"/>
<defs><clipPath id="lbc"><rect x="744" y="404" width="323.6" height="320"/></clipPath></defs>
<g clip-path="url(#lbc)"><g transform="scale(1.15 1)" font-family="Liberation Mono" font-size="11.5" letter-spacing="0.283" fill="#000" style="white-space:pre">
<text x="728.348" y="416.2" xml:space="preserve">1    J Broughton, near Brunswick</text>
<text x="728.348" y="428.4" xml:space="preserve">2    J Broughton, near Brunswick</text>
<text x="728.348" y="440.5" xml:space="preserve">3(P) Predicted</text>
</g></g>
<rect x="744" y="724" width="325" height="15" fill="#f0f0f0" />
<rect x="761.2" y="725.5" width="200.7" height="13" fill="#cdcdcd" />
<path d="M754 728.5 L751 731.5 L754 734.5" fill="none" stroke="#606060" stroke-width="1.8"/>
<path d="M1058 728.5 L1061 731.5 L1058 734.5" fill="none" stroke="#606060" stroke-width="1.8"/>
</svg>
</body></html>
